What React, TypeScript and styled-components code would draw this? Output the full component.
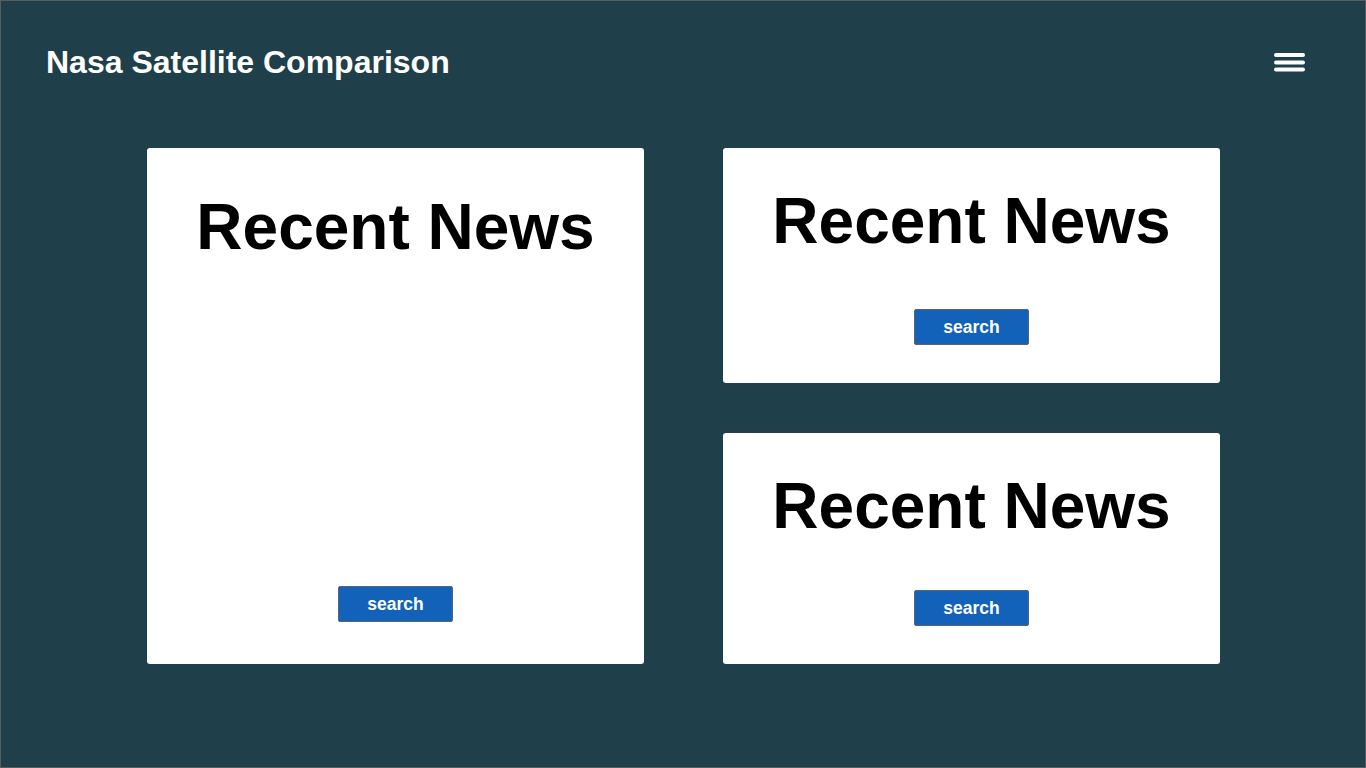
import styled, { createGlobalStyle } from 'styled-components';

const GlobalStyle = createGlobalStyle`
  html, body {
    margin: 0;
    padding: 0;
    background: #1f404a;
  }
  * {
    box-sizing: border-box;
  }
`;

const Page = styled.div`
  min-height: 100vh;
  border: 1px solid #5c5c5c;
  background: #1f404a;
  font-family: "Liberation Sans", Arial, Helvetica, sans-serif;
  padding: 45px 0 0 0;
`;

const Header = styled.header`
  display: flex;
  align-items: center;
  justify-content: space-between;
  padding: 0 60px 0 45px;
`;

const Title = styled.h1`
  margin: 0;
  font-size: 32px;
  line-height: 32px;
  font-weight: 700;
  color: #fff;
`;

const MenuButton = styled.button`
  background: none;
  border: none;
  padding: 0;
  width: 31px;
  height: 19px;
  display: flex;
  cursor: pointer;
`;

const Grid = styled.main`
  display: grid;
  grid-template-columns: 497px 497px;
  grid-template-rows: 235px 231px;
  column-gap: 79px;
  row-gap: 50px;
  margin: 70px 0 0 146px;
`;

const Card = styled.section<{ $tall?: boolean }>`
  background: #fff;
  border-radius: 3px;
  display: flex;
  flex-direction: column;
  align-items: center;
  grid-row: ${({ $tall }) => ($tall ? 'span 2' : 'auto')};
  padding: ${({ $tall }) => ($tall ? '47px 0 42px' : '41px 0 38px')};
`;

const Heading = styled.h2`
  margin: 0;
  font-size: 64px;
  line-height: 64px;
  font-weight: 700;
  color: #000;
`;

const SearchButton = styled.button`
  margin-top: auto;
  width: 115px;
  height: 36px;
  background: #1262b9;
  border: 1px solid #5a6470;
  border-radius: 2px;
  color: #fff;
  font-family: "Liberation Sans", Arial, Helvetica, sans-serif;
  font-size: 17.5px;
  font-weight: 700;
  cursor: pointer;
  padding: 0;
`;

const HamburgerIcon = () => (
  <svg width="31" height="19" viewBox="0 0 31 19" fill="#fff">
    <rect x="0" y="0" width="31" height="4" rx="2" />
    <rect x="0" y="7.5" width="31" height="4" rx="2" />
    <rect x="0" y="14.5" width="31" height="4" rx="2" />
  </svg>
);

const cards = [
  { id: 'main', tall: true },
  { id: 'top', tall: false },
  { id: 'bottom', tall: false },
];

const App = () => (
  <>
    <GlobalStyle />
    <Page>
      <Header>
        <Title>Nasa Satellite Comparison</Title>
        <MenuButton aria-label="menu">
          <HamburgerIcon />
        </MenuButton>
      </Header>
      <Grid>
        {cards.map((card) => (
          <Card key={card.id} $tall={card.tall}>
            <Heading>Recent News</Heading>
            <SearchButton>search</SearchButton>
          </Card>
        ))}
      </Grid>
    </Page>
  </>
);

export default App;
